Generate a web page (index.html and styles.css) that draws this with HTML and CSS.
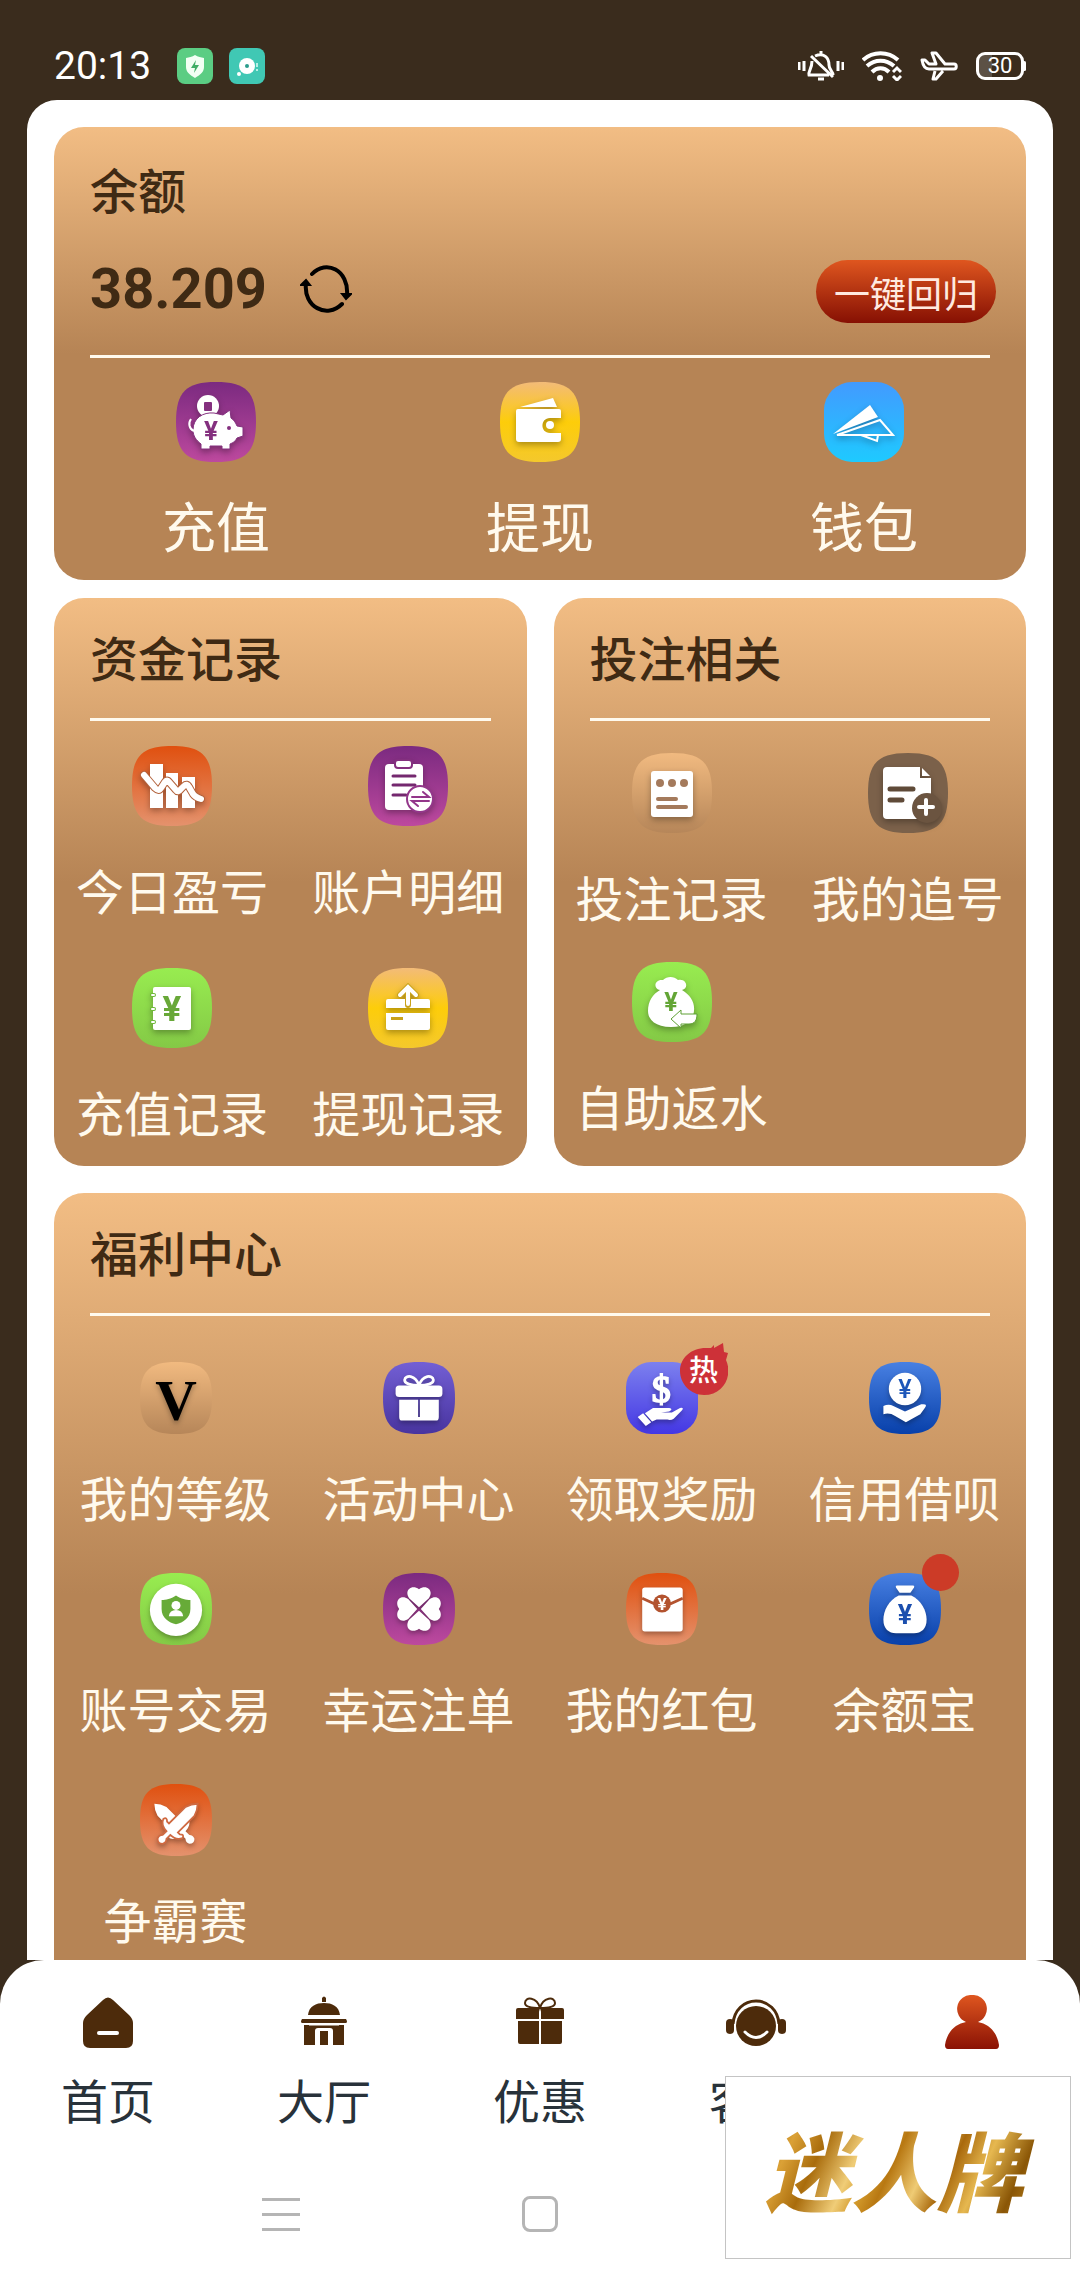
FILE: index.html
```html
<!DOCTYPE html>
<html lang="zh-CN">
<head>
    <meta charset="UTF-8">
    <meta name="viewport" content="width=device-width, initial-scale=1.0">
    <title>我的</title>
    <link rel="stylesheet" href="styles.css">
</head>
<body>
    <!-- Shared gradients and shapes -->
    <svg class="defs" aria-hidden="true">
        <defs>
            <linearGradient id="purple" x2="0" y2="1"><stop stop-color="#7b2a80"/><stop offset="1" stop-color="#bd499e"/></linearGradient>
            <linearGradient id="yellow" x2="0" y2="1"><stop stop-color="#f3bb78"/><stop offset=".5" stop-color="#fdcd0a"/><stop offset="1" stop-color="#f4c82c"/></linearGradient>
            <linearGradient id="sky" x2="0" y2="1"><stop stop-color="#429aff"/><stop offset="1" stop-color="#1ecaff"/></linearGradient>
            <linearGradient id="orange" x2="0" y2="1"><stop stop-color="#e0500f"/><stop offset="1" stop-color="#e4926d"/></linearGradient>
            <linearGradient id="green" x2="0" y2="1"><stop stop-color="#98ec50"/><stop offset="1" stop-color="#84c946"/></linearGradient>
            <linearGradient id="tan" x2="0" y2="1"><stop stop-color="#f1ba80"/><stop offset="1" stop-color="#b68659"/></linearGradient>
            <linearGradient id="violet" x2="0" y2="1"><stop stop-color="#735fd4"/><stop offset="1" stop-color="#48349f"/></linearGradient>
            <linearGradient id="indigo" x2="0" y2="1"><stop stop-color="#7c80ee"/><stop offset="1" stop-color="#4437e4"/></linearGradient>
            <linearGradient id="blue" x2="0" y2="1"><stop stop-color="#4880e2"/><stop offset="1" stop-color="#0840aa"/></linearGradient>
            <linearGradient id="red" x2="0" y2="1"><stop stop-color="#df561f"/><stop offset="1" stop-color="#8a1204"/></linearGradient>
            <path id="tile" d="M40 0C70 0 80 10 80 40S70 80 40 80 0 70 0 40 10 0 40 0Z"/>
            <path id="leaf" d="M40 38L29 28C23 19 32 12 40 18 48 12 57 19 51 28Z"/>
            <path id="sword" d="M40 12Q45 17 47 24V50H50Q54 46 55 51 52 58 43 58V64Q46 67 44 71 40 75 36 71 34 67 37 64V58Q28 58 25 51 26 46 30 50H33V24Q35 17 40 12Z"/>
        </defs>
    </svg>

    <!-- Status bar -->
    <header class="status-bar">
        <span class="time">20:13</span>
        <svg class="app-dot" viewBox="0 0 36 36" aria-hidden="true">
            <rect width="36" height="36" rx="8" fill="#5bcd83"/>
            <path d="M18 7C15 9 12 9 9 10V19C9 24 13 27 18 30 23 27 27 24 27 19V10C24 9 21 9 18 7Z" fill="#f2fff4"/>
            <path d="M19 12L14 20H18L17 25 22 17H18Z" fill="#3fae66"/>
        </svg>
        <svg class="app-dot" viewBox="0 0 36 36" aria-hidden="true">
            <rect width="36" height="36" rx="8" fill="#40c8b4"/>
            <circle cx="18" cy="18" r="8" fill="#fff"/><circle cx="18" cy="18" r="2" fill="#2b9c8c"/>
            <circle cx="10" cy="26" r="2" fill="#fff"/>
            <path d="M28 15V19M28 21V23" stroke="#b5f0e6" stroke-width="2"/>
        </svg>
        <div class="status-icons">
            <svg class="bell" viewBox="0 0 46 30" fill="none" stroke="#fff" stroke-width="3" aria-hidden="true">
                <path d="M1 11V19M6 10V20M40 10V20M45 11V19" />
                <path d="M23 0V4M17 5C26 1 31 7 31 14 31 19 35 20 35 24M14 10C14 18 10 20 11 24H31M13 5L35 26"/>
                <path d="M20 28H26" />
            </svg>
            <svg class="wifi" viewBox="0 0 40 30" fill="none" stroke="#fff" stroke-width="4" aria-hidden="true">
                <path d="M1 9C11 0 26 0 36 9M5 15C13 8 24 8 32 15M10 21C15 16 22 16 27 21"/>
                <circle cx="18" cy="27" r="3" fill="#fff" stroke="none"/>
                <path d="M31 21L35 17 39 21M31 25L35 29 39 25" stroke-width="3"/>
            </svg>
            <svg class="plane" viewBox="0 0 38 30" fill="none" stroke="#fff" stroke-width="3" stroke-linejoin="round" aria-hidden="true">
                <path d="M2 9H5L9 13H16L12 2H16L25 13H34C37 13 37 18 34 18H9C5 18 3 15 2 9ZM15 20L13 28H16L23 20"/>
            </svg>
            <span class="battery">30</span>
        </div>
    </header>

    <main>
        <div class="panel">
            <!-- Balance -->
            <section class="card">
                <div class="balance-head">
                    <h2>余额</h2>
                    <div class="balance-row">
                        <strong class="amount">38.209</strong>
                        <button class="refresh" type="button" aria-label="刷新">
                            <svg viewBox="0 0 52 48" fill="none" stroke="#000" stroke-width="4" stroke-linecap="round" aria-hidden="true">
                                <path d="M12 9C26-6 49 5 47 30M42 39C27 54 3 42 6 18"/>
                                <path d="M42 29L46 34 51 29ZM1 20L6 15 10 20Z" fill="#000" stroke-width="2"/>
                            </svg>
                        </button>
                        <button class="recall" type="button">一键回归</button>
                    </div>
                </div>
                <div class="grid grid-3">
                    <a class="item item-large" href="#">
                        <svg class="icon" viewBox="0 0 80 80" aria-hidden="true">
                            <use href="#tile" fill="url(#purple)"/>
                            <g class="glyph">
                                <circle cx="32" cy="24" r="11"/>
                                <rect x="28" y="20" width="8" height="9" rx="1" fill="#84307f"/>
                                <path d="M17 48C17 36 27 30 38 31L47 33 54 28 55 36C59 39 60 42 61 44L67 45V54L61 56C59 60 56 61 54 62V67H46V64H34V67H25V62C20 58 17 54 17 48Z" stroke="#84307f" stroke-width="1"/>
                                <path d="M18 49C13 47 12 41 15 37" fill="none" stroke="#fff" stroke-width="2"/>
                                <circle cx="53" cy="46" r="2" fill="#84307f"/>
                                <text x="35" y="58" font-size="26" fill="#84307f">¥</text>
                            </g>
                        </svg>
                        <span>充值</span>
                    </a>
                    <a class="item item-large" href="#">
                        <svg class="icon" viewBox="0 0 80 80" aria-hidden="true">
                            <use href="#tile" fill="url(#yellow)"/>
                            <g class="glyph">
                                <path d="M20 25L53 16 57 25Z"/>
                                <path d="M18 27H59Q61 27 61 29V36H50C40 36 40 51 50 51H61V57Q61 60 58 60H19Q16 60 16 57V29Q16 27 18 27Z"/>
                                <circle cx="50" cy="43" r="4"/>
                            </g>
                        </svg>
                        <span>提现</span>
                    </a>
                    <a class="item item-large" href="#">
                        <svg class="icon" viewBox="0 0 80 80" aria-hidden="true">
                            <rect width="80" height="80" rx="28" fill="url(#sky)"/>
                            <g class="glyph">
                                <path d="M46 23L54 35 9 52Z"/>
                                <path d="M56 38L69 53H13ZM37 53L53 59 54 53" fill="none" stroke="#fff" stroke-width="2"/>
                            </g>
                        </svg>
                        <span>钱包</span>
                    </a>
                </div>
            </section>

            <div class="card-pair">
                <!-- Funds -->
                <section class="card">
                    <h2 class="card-title">资金记录</h2>
                    <div class="grid grid-2">
                        <a class="item" href="#">
                            <svg class="icon" viewBox="0 0 80 80" aria-hidden="true">
                                <use href="#tile" fill="url(#orange)"/>
                                <g class="glyph">
                                    <path d="M18 18H31V62H18ZM34 27H46V62H34ZM50 31H63V62H50Z"/>
                                    <path d="M12 29L23 42Q27 46 29 42L33 36Q35 33 37 36L44 44Q46 47 49 43L52 40Q55 37 57 41L61 48Q63 51 69 53" fill="none" stroke="#b3633d" stroke-width="8" stroke-linecap="round"/>
                                    <path d="M12 29L23 42Q27 46 29 42L33 36Q35 33 37 36L44 44Q46 47 49 43L52 40Q55 37 57 41L61 48Q63 51 69 53" fill="none" stroke="#fff" stroke-width="6" stroke-linecap="round"/>
                                </g>
                            </svg>
                            <span>今日盈亏</span>
                        </a>
                        <a class="item" href="#">
                            <svg class="icon" viewBox="0 0 80 80" aria-hidden="true">
                                <use href="#tile" fill="url(#purple)"/>
                                <g class="glyph">
                                    <rect x="17" y="18" width="38" height="46" rx="4"/>
                                    <rect x="27" y="14" width="17" height="8" rx="3" stroke="#84307f" stroke-width="2"/>
                                    <path d="M25 30H47M25 39H47M25 49H38" stroke="#74286f" stroke-width="3" stroke-linecap="round"/>
                                    <circle cx="52" cy="53" r="13" stroke="#93368a" stroke-width="2"/>
                                    <path d="M44 51H61L55 46M61 55H44L50 60" fill="none" stroke="#93368a" stroke-width="2" stroke-linecap="round"/>
                                </g>
                            </svg>
                            <span>账户明细</span>
                        </a>
                        <a class="item" href="#">
                            <svg class="icon" viewBox="0 0 80 80" aria-hidden="true">
                                <use href="#tile" fill="url(#green)"/>
                                <g class="glyph">
                                    <rect x="21" y="19" width="38" height="43" rx="2"/>
                                    <path d="M20 27H22M20 41H22M20 54H22" stroke="#6fb83a" stroke-width="4" stroke-linecap="round"/>
                                    <path d="M20 27H22M20 41H22M20 54H22" stroke="#fff" stroke-width="2" stroke-linecap="round"/>
                                    <text x="40" y="53" font-size="35" fill="#68a838">¥</text>
                                </g>
                            </svg>
                            <span>充值记录</span>
                        </a>
                        <a class="item" href="#">
                            <svg class="icon" viewBox="0 0 80 80" aria-hidden="true">
                                <use href="#tile" fill="url(#yellow)"/>
                                <g class="glyph">
                                    <path d="M20 31H60Q62 31 62 33V40H18V33Q18 31 20 31ZM18 45H62V60Q62 62 60 62H20Q18 62 18 60Z"/>
                                    <rect x="23" y="49" width="12" height="3" fill="#c9a21a"/>
                                    <path d="M40 37V21M32 27L40 19 48 27" fill="none" stroke="#c9a21a" stroke-width="6" stroke-linecap="round"/>
                                    <path d="M40 36V21M32 27L40 19 48 27" fill="none" stroke="#fff" stroke-width="4" stroke-linecap="round"/>
                                </g>
                            </svg>
                            <span>提现记录</span>
                        </a>
                    </div>
                </section>

                <!-- Betting -->
                <section class="card">
                    <h2 class="card-title">投注相关</h2>
                    <div class="grid grid-2 grid-loose">
                        <a class="item" href="#">
                            <svg class="icon" viewBox="0 0 80 80" aria-hidden="true">
                                <use href="#tile" fill="url(#tan)"/>
                                <g class="glyph">
                                    <rect x="19" y="18" width="42" height="46" rx="3"/>
                                    <g fill="#a47a5c"><circle cx="28" cy="30" r="4"/><circle cx="40" cy="30" r="4"/><circle cx="52" cy="30" r="4"/></g>
                                    <path d="M26 46H44M26 54H54" stroke="#a47a5c" stroke-width="4" stroke-linecap="round"/>
                                </g>
                            </svg>
                            <span>投注记录</span>
                        </a>
                        <a class="item" href="#">
                            <svg class="icon" viewBox="0 0 80 80" aria-hidden="true">
                                <use href="#tile" fill="#7b614a"/>
                                <g class="glyph">
                                    <path d="M19 14H52V25H63V62Q63 66 59 66H19Q15 66 15 62V18Q15 14 19 14ZM54 15L62 23H54Z"/>
                                    <path d="M22 36H45M22 47H34" stroke="#5f4a38" stroke-width="5" stroke-linecap="round"/>
                                    <circle cx="59" cy="55" r="15" fill="#6b5440"/>
                                    <path d="M58 47V61M51 54H65" stroke="#fff" stroke-width="4" stroke-linecap="round"/>
                                </g>
                            </svg>
                            <span>我的追号</span>
                        </a>
                        <a class="item" href="#">
                            <svg class="icon" viewBox="0 0 80 80" aria-hidden="true">
                                <use href="#tile" fill="url(#green)"/>
                                <g class="glyph">
                                    <path d="M28 28C21 27 22 17 31 18 35 14 42 14 46 18 55 16 57 27 50 28 58 33 63 40 62 49 61 59 53 65 39 65 24 65 16 58 16 49 16 39 21 32 28 28Z"/>
                                    <text x="39" y="49" font-size="25" fill="#63a535">¥</text>
                                    <path d="M39 57L49 48V52H65C65 58 63 62 57 62H49V66Z" stroke="#5fa034" stroke-width="1"/>
                                </g>
                            </svg>
                            <span>自助返水</span>
                        </a>
                    </div>
                </section>
            </div>

            <!-- Welfare center -->
            <section class="card card-welfare">
                <h2 class="card-title">福利中心</h2>
                <div class="grid grid-4">
                    <a class="item item-small" href="#">
                        <svg class="icon" viewBox="0 0 80 80" aria-hidden="true">
                            <use href="#tile" fill="url(#tan)"/>
                            <g class="glyph"><text class="serif" x="40" y="64" font-size="64" fill="#000">V</text></g>
                        </svg>
                        <span>我的等级</span>
                    </a>
                    <a class="item item-small" href="#">
                        <svg class="icon" viewBox="0 0 80 80" aria-hidden="true">
                            <use href="#tile" fill="url(#violet)"/>
                            <g class="glyph">
                                <rect x="14" y="26" width="52" height="13" rx="4"/>
                                <path d="M18 42H39V61H41V42H62V61Q62 65 59 65H21Q18 65 18 61Z"/>
                                <path d="M40 26C36 14 25 14 24 20 24 24 31 26 40 26 49 26 56 24 56 20 55 14 44 14 40 26Z" fill="none" stroke="#fff" stroke-width="3"/>
                            </g>
                        </svg>
                        <span>活动中心</span>
                    </a>
                    <a class="item item-small" href="#">
                        <div class="icon-wrap">
                            <svg class="icon" viewBox="0 0 80 80" aria-hidden="true">
                                <rect width="80" height="80" rx="28" fill="url(#indigo)"/>
                                <g class="glyph">
                                    <text class="serif dollar" x="39" y="44" font-size="42">$</text>
                                    <path d="M13 61L19 57 28 67 22 71ZM21 57L30 51H48Q53 52 48 55L39 56H51L60 51Q65 50 62 54L53 63Q50 65 46 64H34L29 66Z"/>
                                </g>
                            </svg>
                            <span class="hot">
                                <svg viewBox="0 0 48 52" aria-hidden="true"><path d="M24 52C11 52 0 41 0 28S11 5 26 5H31L34 2V5L43 0 44 9 48 10 46 17C53 32 44 52 24 52Z" fill="#cd3138"/></svg>
                                <b>热</b>
                            </span>
                        </div>
                        <span>领取奖励</span>
                    </a>
                    <a class="item item-small" href="#">
                        <svg class="icon" viewBox="0 0 80 80" aria-hidden="true">
                            <use href="#tile" fill="url(#blue)"/>
                            <g class="glyph">
                                <circle cx="40" cy="30" r="18"/>
                                <text class="thin" x="40" y="40" font-size="28" fill="#1d56b8">¥</text>
                                <path d="M16 49Q22 46 27 49L40 55 58 47Q66 46 62 51L57 58 41 67 29 60Q23 56 16 58Z"/>
                            </g>
                        </svg>
                        <span>信用借呗</span>
                    </a>
                    <a class="item item-small" href="#">
                        <svg class="icon" viewBox="0 0 80 80" aria-hidden="true">
                            <use href="#tile" fill="url(#green)"/>
                            <g class="glyph">
                                <circle cx="40" cy="41" r="29"/>
                                <path d="M40 25C34 29 29 30 24 30V40C24 50 32 55 40 57 48 55 56 50 56 40V30C51 30 46 29 40 25Z" fill="#67ab38"/>
                                <circle cx="40" cy="36" r="5"/>
                                <path d="M32 48Q33 41 40 41T48 48Z"/>
                            </g>
                        </svg>
                        <span>账号交易</span>
                    </a>
                    <a class="item item-small" href="#">
                        <svg class="icon" viewBox="0 0 80 80" aria-hidden="true">
                            <use href="#tile" fill="url(#purple)"/>
                            <g class="glyph">
                                <use href="#leaf"/><use href="#leaf" transform="rotate(90 40 40)"/>
                                <use href="#leaf" transform="rotate(180 40 40)"/><use href="#leaf" transform="rotate(270 40 40)"/>
                            </g>
                        </svg>
                        <span>幸运注单</span>
                    </a>
                    <a class="item item-small" href="#">
                        <svg class="icon" viewBox="0 0 80 80" aria-hidden="true">
                            <use href="#tile" fill="url(#orange)"/>
                            <g class="glyph">
                                <rect x="18" y="16" width="45" height="49" rx="3"/>
                                <path d="M18 28L31 34H50L63 28" fill="none" stroke="#b3532f" stroke-width="3"/>
                                <circle cx="40" cy="34" r="10" fill="#b3532f"/>
                                <text x="40" y="41" font-size="19" fill="#fff">¥</text>
                            </g>
                        </svg>
                        <span>我的红包</span>
                    </a>
                    <a class="item item-small" href="#">
                        <div class="icon-wrap">
                            <svg class="icon" viewBox="0 0 80 80" aria-hidden="true">
                                <use href="#tile" fill="url(#blue)"/>
                                <g class="glyph">
                                    <path d="M31 14H49Q51 14 50 16L46 22H34L30 16Q29 14 31 14Z"/>
                                    <path d="M33 25H47C58 30 64 42 64 52 64 62 58 67 50 67H30C22 67 16 62 16 52 16 42 22 30 33 25Z"/>
                                    <text x="40" y="57" font-size="30" fill="#1b4fae">¥</text>
                                </g>
                            </svg>
                            <span class="dot"></span>
                        </div>
                        <span>余额宝</span>
                    </a>
                    <a class="item item-small" href="#">
                        <svg class="icon" viewBox="0 0 80 80" aria-hidden="true">
                            <use href="#tile" fill="url(#orange)"/>
                            <g class="glyph">
                                <use href="#sword" transform="rotate(-45 40 46)"/>
                                <use href="#sword" transform="rotate(45 40 46)" stroke="#cf6a42" stroke-width="2"/>
                            </g>
                        </svg>
                        <span>争霸赛</span>
                    </a>
                </div>
            </section>
        </div>
    </main>

    <!-- Bottom tabs -->
    <footer>
        <nav class="tabs">
            <a href="#">
                <svg viewBox="0 0 60 56" fill="#4d2b0b" aria-hidden="true">
                    <path d="M25 5Q30 0 35 5L51 20Q55 24 55 28V46Q55 53 48 53H12Q5 53 5 46V28Q5 24 9 20Z"/>
                    <path d="M21 38H39" stroke="#fff" stroke-width="4" stroke-linecap="round"/>
                </svg>
                <span>首页</span>
            </a>
            <a href="#">
                <svg viewBox="0 0 60 56" fill="#4d2b0b" aria-hidden="true">
                    <path d="M28 7V3Q30 0 32 3V7ZM14 20C15 11 22 8 30 8S45 11 46 20ZM8 24H52Q54 27 52 28H8Q6 27 8 24ZM10 30H50V50H39V36Q39 33 36 33H24Q21 33 21 36V50H10ZM26 36H34V50H26Z"/>
                    <path d="M15 30H45" stroke="#fff" stroke-width="1"/>
                </svg>
                <span>大厅</span>
            </a>
            <a href="#">
                <svg viewBox="0 0 60 56" fill="#4d2b0b" aria-hidden="true">
                    <path d="M8 13H29V24H6V15Q6 13 8 13ZM31 13H52Q54 13 54 15V24H31ZM8 26H29V49H10Q8 49 8 47ZM31 26H52V47Q52 49 50 49H31Z"/>
                    <path d="M30 13C27 2 15 1 15 8 15 12 22 13 30 13 38 13 45 12 45 8 45 1 33 2 30 13Z" fill="none" stroke="#4d2b0b" stroke-width="2"/>
                </svg>
                <span>优惠</span>
            </a>
            <a href="#">
                <svg viewBox="0 0 60 56" fill="#4d2b0b" aria-hidden="true">
                    <circle cx="30" cy="31" r="20"/>
                    <path d="M7 29C8 15 18 6 30 6S52 15 53 29" fill="none" stroke="#4d2b0b" stroke-width="3"/>
                    <rect y="24" width="8" height="15" rx="4"/><rect x="52" y="24" width="8" height="15" rx="4"/>
                    <path d="M19 37Q30 48 41 37" fill="none" stroke="#fff" stroke-width="3" stroke-linecap="round"/>
                </svg>
                <span>客服</span>
            </a>
            <a href="#" aria-label="我的" aria-current="page">
                <svg viewBox="0 0 60 56" fill="url(#red)" aria-hidden="true">
                    <path d="M30 0A14 14 0 0 1 36 27C47 29 55 37 57 50Q57 54 54 54H6Q3 54 3 50C5 37 13 29 24 27A14 14 0 0 1 30 0Z"/>
                </svg>
            </a>
        </nav>
        <div class="system-keys">
            <span class="key-menu"></span>
            <span class="key-home"></span>
        </div>
        <div class="brand"><span>迷人牌</span></div>
    </footer>
</body>
</html>
```

FILE: styles.css
```css
* {
    box-sizing: border-box;
    margin: 0;
    padding: 0;
}

body {
    font-family: Roboto, "Noto Sans CJK SC", sans-serif;
    display: flex;
    flex-direction: column;
    height: 100vh;
    background: #3a2c1d;
    color: #3f2a14;
}

a {
    color: inherit;
    text-decoration: none;
}

button {
    border: none;
    background: none;
    font-family: inherit;
    cursor: pointer;
}

svg {
    display: block;
}

.defs {
    position: absolute;
    width: 0;
    height: 0;
}

/* Status bar */
.status-bar {
    display: flex;
    align-items: center;
    gap: 16px;
    flex: none;
    height: 100px;
    padding: 32px 56px 0 54px;
    color: #fff;
}

.time {
    font-size: 39px;
    margin-right: 10px;
}

.app-dot {
    width: 36px;
    height: 36px;
}

.status-icons {
    display: flex;
    align-items: center;
    gap: 18px;
    margin-left: auto;
}

.bell {
    width: 46px;
    height: 30px;
}

.wifi {
    width: 40px;
    height: 30px;
}

.plane {
    width: 38px;
    height: 30px;
}

.battery {
    position: relative;
    width: 48px;
    height: 28px;
    border: 3px solid #fff;
    border-radius: 9px;
    background: linear-gradient(90deg, #5c5145 32%, transparent 32%);
    font-size: 22px;
    line-height: 22px;
    text-align: center;
}

.battery::after {
    content: "";
    position: absolute;
    top: 6px;
    right: -5px;
    width: 3px;
    height: 10px;
    background: #fff;
    border-radius: 2px;
}

/* Scrolling area */
main {
    flex: 1;
    min-height: 0;
    padding: 0 27px;
    overflow-y: auto;
    scrollbar-width: none;
}

.panel {
    padding: 27px;
    background: #fff;
    border-radius: 30px 30px 0 0;
}

/* Cards */
.card {
    padding-bottom: 14px;
    border-radius: 30px;
    background: linear-gradient(#f2bd84, #b68455 50%);
}

.card-pair {
    display: grid;
    grid-template-columns: 1fr 1fr;
    gap: 27px;
    margin: 18px 0 27px;
}

.card-welfare {
    padding-bottom: 36px;
}

h2 {
    font-size: 48px;
    font-weight: 500;
    line-height: 72px;
}

.card-title,
.balance-head {
    margin: 0 36px;
    border-bottom: 3px solid #fffaee;
}

.card-title {
    padding: 27px 0 21px;
}

.balance-head {
    padding: 30px 0 6px;
}

.balance-row {
    display: flex;
    align-items: center;
    height: 120px;
}

.amount {
    font-size: 56px;
    font-weight: 700;
}

.refresh {
    width: 52px;
    height: 48px;
    margin-left: 33px;
}

.recall {
    width: 180px;
    height: 63px;
    margin: 5px -6px 0 auto;
    border-radius: 32px;
    background: linear-gradient(#df561f, #861003);
    color: #ffeae0;
    font-size: 36px;
}

/* Icon grids */
.grid {
    display: grid;
    row-gap: 38px;
    padding-top: 24px;
}

.grid-2 {
    grid-template-columns: repeat(2, 1fr);
    padding-top: 25px;
}

.grid-3 {
    grid-template-columns: repeat(3, 1fr);
}

.grid-4 {
    grid-template-columns: repeat(4, 1fr);
    row-gap: 36px;
    padding-top: 46px;
}

.grid-loose {
    row-gap: 25px;
    padding-top: 32px;
}

.item {
    display: flex;
    flex-direction: column;
    align-items: center;
    gap: 32px;
    color: #fffaee;
    font-size: 48px;
    line-height: 72px;
    white-space: nowrap;
}

.item-large {
    font-size: 54px;
}

.item-small {
    gap: 31px;
}

.icon {
    width: 80px;
    height: 80px;
}

.item-small .icon {
    width: 72px;
    height: 72px;
}

.icon-wrap {
    position: relative;
}

.glyph {
    fill: #fff;
    filter: drop-shadow(0 3px 3px rgba(0, 0, 0, 0.3));
}

.glyph text {
    font-family: Roboto, sans-serif;
    font-weight: 700;
    text-anchor: middle;
}

.glyph .serif {
    font-family: "Liberation Serif", serif;
}

.glyph .thin {
    font-weight: 500;
}

.glyph .dollar {
    font-weight: 400;
    stroke: #fff;
    stroke-width: 2;
}

/* Badges */
.hot {
    position: absolute;
    top: -19px;
    left: 54px;
    width: 48px;
    height: 52px;
}

.hot b {
    position: absolute;
    inset: 6px 0 0;
    color: #fff;
    font-size: 29px;
    font-weight: 500;
    line-height: 44px;
    text-align: center;
}

.dot {
    position: absolute;
    top: -19px;
    right: -18px;
    width: 37px;
    height: 37px;
    border-radius: 50%;
    background: #cc3b27;
}

/* Footer */
footer {
    position: relative;
    flex: none;
    height: 320px;
    border-radius: 44px 44px 0 0;
    background: #fff;
}

.tabs {
    display: grid;
    grid-template-columns: repeat(5, 1fr);
    padding-top: 35px;
}

.tabs a {
    display: flex;
    flex-direction: column;
    align-items: center;
    gap: 16px;
    color: #28323a;
    font-size: 47px;
    line-height: 72px;
}

.tabs svg {
    width: 60px;
    height: 56px;
}

.system-keys {
    display: grid;
    grid-template-columns: repeat(3, 24%);
    justify-content: center;
    justify-items: center;
    align-items: center;
    margin-top: 57px;
}

.key-menu {
    width: 38px;
    height: 33px;
    background: linear-gradient(#b5b5b5 3px, transparent 3px 15px, #b5b5b5 15px 18px, transparent 18px 30px, #b5b5b5 30px);
}

.key-home {
    width: 36px;
    height: 36px;
    border: 3px solid #b5b5b5;
    border-radius: 8px;
}

/* Floating brand plate */
.brand {
    position: absolute;
    right: 9px;
    bottom: 21px;
    display: flex;
    align-items: center;
    justify-content: center;
    width: 346px;
    height: 183px;
    border: 1px solid #c4c4c4;
    background: #fff;
}

.brand span {
    padding: 0 12px 0 4px;
    background: linear-gradient(115deg, #8f5c08, #dba136 14%, #a96c0c 24%, #f0cd78 36%, #d39a2c 42%, #b87812 48%, #efcb74 58%, #a9690c 66%, #e6b850 76%, #8a5606 88%, #c98f25);
    background-clip: text;
    -webkit-background-clip: text;
    color: transparent;
    font-family: "Noto Sans CJK SC", sans-serif;
    font-size: 86px;
    font-style: italic;
    font-weight: 900;
    line-height: 120px;
}
```
